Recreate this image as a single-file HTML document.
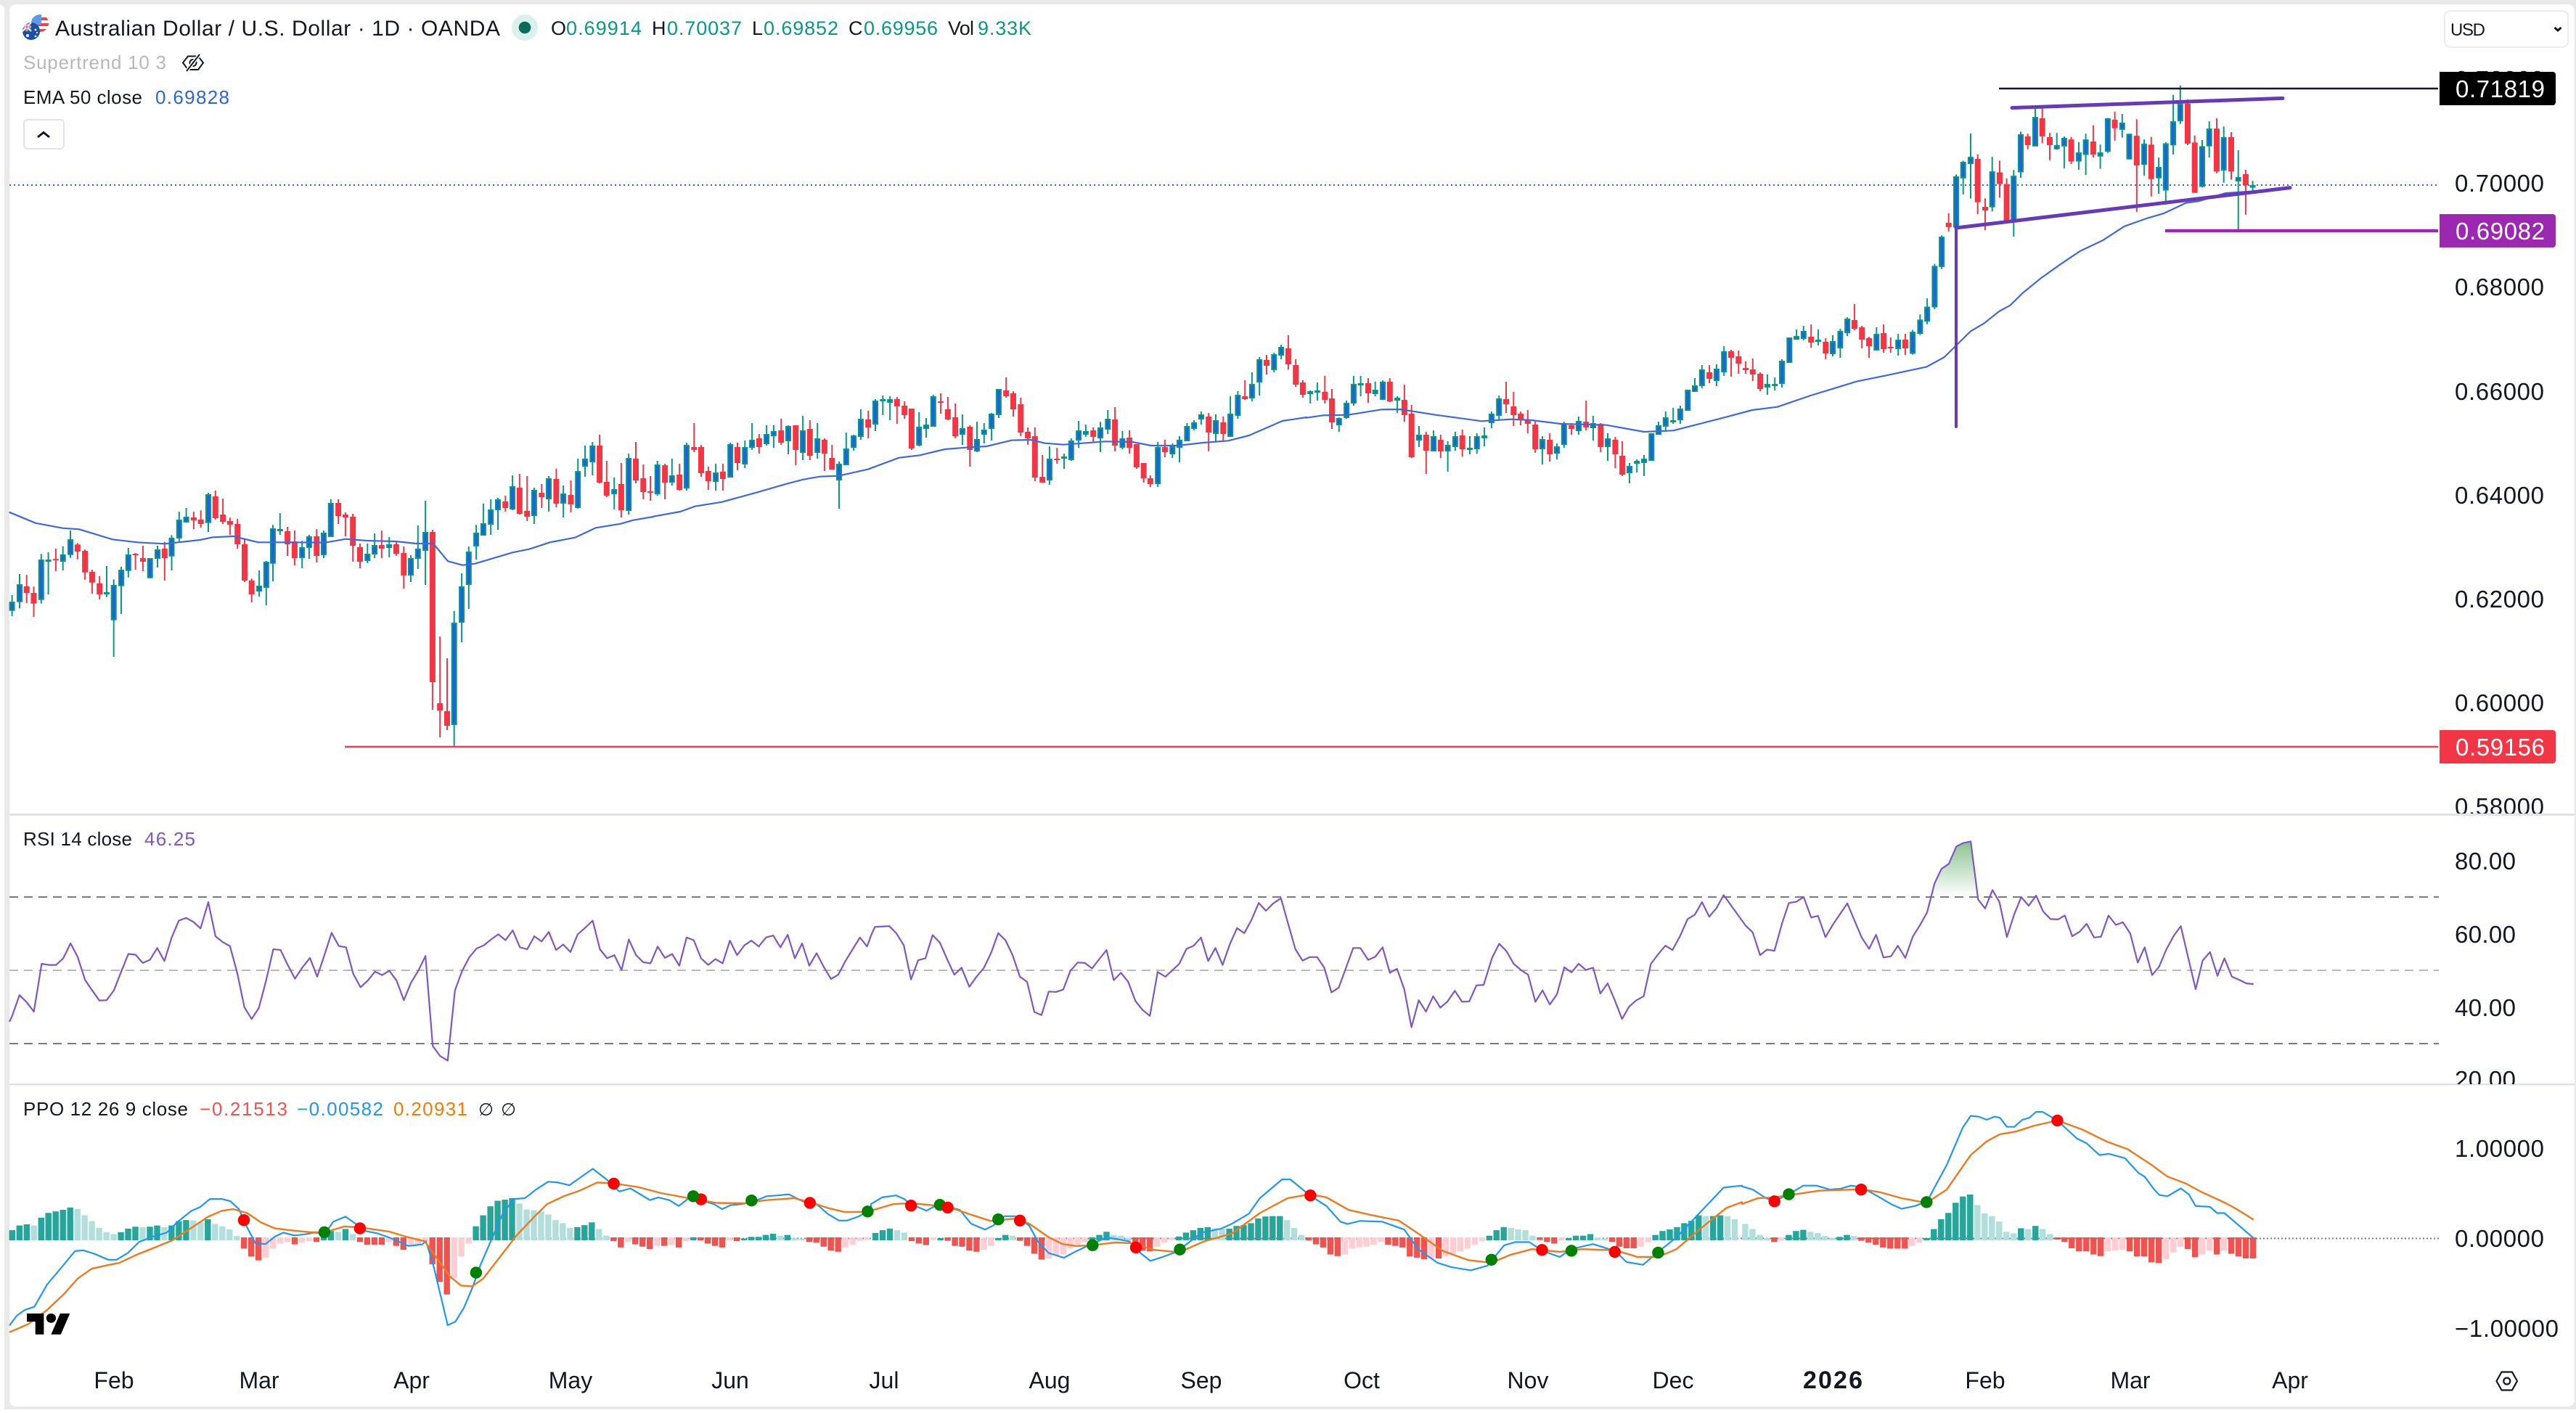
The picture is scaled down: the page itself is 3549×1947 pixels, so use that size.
<!DOCTYPE html>
<html lang="en"><head><meta charset="utf-8"><title>AUD/USD chart</title>
<style>
html,body{margin:0;padding:0;background:#e9e9e9;width:3549px;height:1947px;overflow:hidden}
svg{display:block}
text{font-family:"Liberation Sans",sans-serif;fill:#131722}
.a{font-size:33px}
.w{font-size:33px;fill:#fff}
.t{font-size:32px;text-anchor:middle}
.l{font-size:26px}
.h{font-size:27px}
.g{fill:#089981}
</style></head><body>
<svg xmlns="http://www.w3.org/2000/svg" width="3549" height="1947" viewBox="0 0 3549 1947">
<defs>
<clipPath id="c1"><rect x="3300" y="1080" width="249" height="41"/></clipPath>
<clipPath id="c2"><rect x="3300" y="1450" width="249" height="44"/></clipPath>
<clipPath id="f1"><circle cx="55" cy="32" r="12"/></clipPath>
<clipPath id="f2"><circle cx="43" cy="43" r="12"/></clipPath>
<linearGradient id="gr" x1="0" y1="0" x2="0" y2="1"><stop offset="0" stop-color="#8cc38f"/><stop offset="1" stop-color="#ffffff"/></linearGradient>
</defs>
<rect x="0" y="0" width="3549" height="1947" fill="#e9e9e9"/>
<rect x="-10" y="6" width="16" height="1950" rx="8" fill="#fff"/>
<rect x="13" y="6" width="3534" height="1932" rx="9" fill="#fff"/>
<rect x="0" y="1942" width="3549" height="5" fill="#fff"/>
<rect x="13" y="1121" width="3534" height="3" fill="#e0e3eb"/>
<rect x="13" y="1493" width="3534" height="2.5" fill="#e0e3eb"/>

<!-- price pane decorations -->
<line x1="13" y1="255" x2="3360" y2="255" stroke="#2962ff" stroke-width="2" stroke-dasharray="2 4"/>
<g id="candles"></g>
<polyline id="ema" fill="none" stroke="#3f68de" stroke-width="2.2" stroke-linejoin="round"/>
<line x1="2754" y1="122" x2="3359" y2="122" stroke="#131722" stroke-width="2.6"/>
<line x1="2772" y1="148.6" x2="3145" y2="135.4" stroke="#673ab7" stroke-width="5" stroke-linecap="round"/>
<line x1="2695" y1="314" x2="3155" y2="258.6" stroke="#673ab7" stroke-width="5" stroke-linecap="round"/>
<line x1="2695" y1="312" x2="2695" y2="588" stroke="#673ab7" stroke-width="4" stroke-linecap="round"/>
<line x1="2983" y1="318" x2="3359" y2="318" stroke="#9c27b0" stroke-width="4.6"/>
<line x1="475" y1="1029" x2="3359" y2="1029" stroke="#e5404f" stroke-width="2.6"/>

<!-- price axis -->
<text class="a" x="3382" y="121" textLength="123">0.72000</text>
<text class="a" x="3382" y="264" textLength="123">0.70000</text>
<text class="a" x="3382" y="407" textLength="123">0.68000</text>
<text class="a" x="3382" y="551" textLength="123">0.66000</text>
<text class="a" x="3382" y="694" textLength="123">0.64000</text>
<text class="a" x="3382" y="837" textLength="123">0.62000</text>
<text class="a" x="3382" y="980" textLength="123">0.60000</text>
<g clip-path="url(#c1)"><text class="a" x="3382" y="1123" textLength="123">0.58000</text></g>
<path d="M3361 99H3517a4 4 0 0 1 4 4V141a4 4 0 0 1-4 4H3361Z" fill="#000"/>
<text class="w" x="3383" y="134" textLength="123">0.71819</text>
<path d="M3361 295H3517a4 4 0 0 1 4 4V337a4 4 0 0 1-4 4H3361Z" fill="#9c27b0"/>
<text class="w" x="3383" y="330" textLength="123">0.69082</text>
<path d="M3361 1006H3517a4 4 0 0 1 4 4V1048a4 4 0 0 1-4 4H3361Z" fill="#f23645"/>
<text class="w" x="3383" y="1041" textLength="123">0.59156</text>

<!-- RSI -->
<polygon id="rsifill" fill="url(#gr)"/>
<line x1="13" y1="1236" x2="3360" y2="1236" stroke="#787b86" stroke-width="2" stroke-dasharray="12 8"/>
<line x1="13" y1="1337" x2="3360" y2="1337" stroke="#b9b9b9" stroke-width="2" stroke-dasharray="12 8"/>
<line x1="13" y1="1438" x2="3360" y2="1438" stroke="#787b86" stroke-width="2" stroke-dasharray="12 8"/>
<polyline id="rsi" fill="none" stroke="#7e57c2" stroke-width="2.2" stroke-linejoin="round"/>
<text class="a" x="3382" y="1198" textLength="84">80.00</text>
<text class="a" x="3382" y="1299" textLength="84">60.00</text>
<text class="a" x="3382" y="1400" textLength="84">40.00</text>
<g clip-path="url(#c2)"><text class="a" x="3382" y="1499" textLength="84">20.00</text></g>
<text class="l" x="32" y="1165" textLength="150">RSI 14 close</text>
<text class="l" x="199" y="1165" textLength="70" style="fill:#7e57c2">46.25</text>

<!-- PPO -->
<line x1="13" y1="1706.5" x2="3360" y2="1706.5" stroke="#787b86" stroke-width="2" stroke-dasharray="2 3"/>
<g id="hist"></g>
<polyline id="ppoB" fill="none" stroke="#2196f3" stroke-width="2.2" stroke-linejoin="round"/>
<polyline id="ppoO" fill="none" stroke="#ee7a1e" stroke-width="2.4" stroke-linejoin="round"/>
<g id="dots"></g>
<text class="a" x="3382" y="1594" textLength="123">1.00000</text>
<text class="a" x="3382" y="1718" textLength="123">0.00000</text>
<text class="a" x="3382" y="1842" textLength="143">−1.00000</text>
<text class="l" x="32" y="1537" textLength="227">PPO 12 26 9 close</text>
<text class="l" x="275" y="1537" textLength="121" style="fill:#ef5350">−0.21513</text>
<text class="l" x="409" y="1537" textLength="119" style="fill:#2196f3">−0.00582</text>
<text class="l" x="542" y="1537" textLength="102" style="fill:#f57c00">0.20931</text>
<text x="659" y="1537" style="font-size:24px;font-family:'DejaVu Sans',sans-serif">∅</text>
<text x="690" y="1537" style="font-size:24px;font-family:'DejaVu Sans',sans-serif">∅</text>

<!-- TV logo -->
<g transform="translate(37 1803.5) scale(1.67 1.6)" fill="#000"><path d="M14 22H7V11H0V4h14v18zM28 22h-8l7.5-18h8L28 22z"/><circle cx="20" cy="8" r="4"/></g>

<!-- time axis -->
<text class="t" x="157" y="1913">Feb</text>
<text class="t" x="357" y="1913">Mar</text>
<text class="t" x="567" y="1913">Apr</text>
<text class="t" x="786" y="1913">May</text>
<text class="t" x="1006" y="1913">Jun</text>
<text class="t" x="1218" y="1913">Jul</text>
<text class="t" x="1446" y="1913">Aug</text>
<text class="t" x="1655" y="1913">Sep</text>
<text class="t" x="1876" y="1913">Oct</text>
<text class="t" x="2105" y="1913">Nov</text>
<text class="t" x="2305" y="1913">Dec</text>
<text class="t" x="2525" y="1913" style="font-weight:700;font-size:34px" textLength="82">2026</text>
<text class="t" x="2735" y="1913">Feb</text>
<text class="t" x="2935" y="1913">Mar</text>
<text class="t" x="3155" y="1913">Apr</text>
<path d="M3439.5 1903L3446.5 1890.5H3461L3468 1903L3461 1915.5H3446.5Z" fill="none" stroke="#131722" stroke-width="2.2" stroke-linejoin="round"/>
<circle cx="3453.8" cy="1903" r="4.5" fill="none" stroke="#131722" stroke-width="2.2"/>

<!-- legend -->
<g clip-path="url(#f1)"><rect x="43" y="20" width="24" height="24" fill="#fff"/>
<path d="M43 24h24v4H43zM43 32h24v4H43zM43 40h24v4H43z" fill="#e8434f"/><rect x="43" y="20" width="14" height="14" fill="#5b9be8"/></g>
<g clip-path="url(#f2)"><rect x="31" y="31" width="24" height="24" fill="#1c4fa6"/>
<rect x="31" y="31" width="12" height="12" fill="#3b5fb0"/>
<path d="M31 31L43 43M43 31L31 43" stroke="#fff" stroke-width="2"/><path d="M37 31V43M31 37H43" stroke="#fff" stroke-width="2.4"/><path d="M37 31V43M31 37H43" stroke="#e0444f" stroke-width="1.1"/>
<circle cx="49" cy="41" r="1.4" fill="#fff"/><circle cx="49" cy="50" r="1.4" fill="#fff"/><circle cx="38" cy="49" r="2" fill="#fff"/><circle cx="51" cy="45" r="1.1" fill="#fff"/></g>
<text x="76" y="49" style="font-size:30px" textLength="613">Australian Dollar / U.S. Dollar · 1D · OANDA</text>
<circle cx="723" cy="38" r="18" fill="#dbf0ec"/>
<circle cx="723" cy="38" r="8.3" fill="#0a6b58"/>
<text class="h" x="759" y="48" textLength="18">O</text><text class="h g" x="780" y="48" textLength="104">0.69914</text>
<text class="h" x="898" y="48" textLength="18">H</text><text class="h g" x="919" y="48" textLength="103">0.70037</text>
<text class="h" x="1036" y="48" textLength="14">L</text><text class="h g" x="1052" y="48" textLength="103">0.69852</text>
<text class="h" x="1169" y="48" textLength="18">C</text><text class="h g" x="1190" y="48" textLength="102">0.69956</text>
<text class="h" x="1306" y="48" textLength="36">Vol</text><text class="h g" x="1347" y="48" textLength="74">9.33K</text>
<text class="l" x="32" y="95" textLength="197" style="fill:#b8b8b8">Supertrend 10 3</text>
<path d="M252 86.5L259 77.5H273L280 86.5L273 96H259Z" fill="none" stroke="#131722" stroke-width="2" stroke-linejoin="round"/>
<circle cx="266" cy="86.5" r="4.5" fill="none" stroke="#131722" stroke-width="2"/>
<line x1="275" y1="75" x2="257" y2="98" stroke="#fff" stroke-width="5"/>
<line x1="275" y1="75" x2="257" y2="98" stroke="#131722" stroke-width="2"/>
<text class="l" x="32" y="143" textLength="164">EMA 50 close</text>
<text class="l" x="214" y="143" textLength="102" style="fill:#2f62e0">0.69828</text>
<rect x="33" y="165" width="55" height="40" rx="5" fill="#fff" stroke="#e0e3eb" stroke-width="2"/>
<path d="M52 189L60 182.5L68 189" fill="none" stroke="#131722" stroke-width="3"/>
<rect x="3368" y="15" width="170" height="50" rx="8" fill="#fff" stroke="#ececec" stroke-width="2"/>
<text x="3376" y="49" style="font-size:24px" textLength="48">USD</text>
<path d="M3519.5 38L3524 42L3528.5 38" fill="none" stroke="#131722" stroke-width="3"/>
</svg>
<script>
(function(){
function $(i){return document.getElementById(i)}
function cs(sx,ox,sy,oy,s){var u={w:'',b:''},d={w:'',b:''},upB='';
 s.trim().split(/\s+/).forEach(function(e){var p=e.split(',');var x=ox+(+p[0])/sx;
  var H=oy+(+p[1])/sy,T=oy+(+p[2])/sy,B=oy+(+p[3])/sy,L=oy+(+p[4])/sy;x=Math.round(x*10)/10;
  var o=p[5]=='u'?u:d;o.w+='M'+x+' '+H.toFixed(1)+'V'+L.toFixed(1);
  if(p[5]=='u'){upB+='<rect x="'+(x-3)+'" y="'+(T+1).toFixed(1)+'" width="6" height="'+Math.max(B-T-2,1).toFixed(1)+'"/>';}
  else{o.b+='M'+x+' '+T.toFixed(1)+'V'+Math.max(B,T+2).toFixed(1);}
 });
 return '<path d="'+u.w+'" stroke="#089981" stroke-width="2" fill="none"/><path d="'+d.w+'" stroke="#f23645" stroke-width="2" fill="none"/>'+
  '<path d="'+d.b+'" stroke="#f23645" stroke-width="8" fill="none"/><g fill="#1f62dc" stroke="#089981" stroke-width="2">'+upB+'</g>';}
var c='';
c+=cs(1.742,0,3,640,"29,540,567,605,627,u 47,453,495,569,595,u 64,457,504,531,573,d 81,505,531,575,630,d 99,370,393,560,575,u 116,363,393,398,537,u 134,348,391,396,441,d 151,338,372,402,438,u 169,273,309,374,386,u 186,325,331,360,392,d 204,351,357,446,476,d 221,435,444,488,534,d 239,462,491,537,558,d 256,420,528,533,548,u 273,475,498,644,795,u 291,423,435,503,618,u 308,345,372,440,467,u 325,366,369,374,435,d 343,336,387,402,441,d 360,387,387,470,470,u 378,336,351,390,426,u 395,320,348,387,480,d 412,292,303,380,438,u 430,195,228,306,318,u 447,180,216,240,240,u 465,195,219,231,268,d 482,190,228,246,261,d 500,117,123,242,279,u 517,108,132,222,228,d 535,141,207,237,246,d 552,220,234,249,292,d 570,225,246,330,348,d 587,310,330,480,486,d 604,472,480,537,570,d 622,438,501,525,546,u 639,399,402,510,582,u 655,250,264,410,483,u 672,201,267,273,291,u 690,258,276,330,378,d 707,273,318,387,417,d 725,316,342,387,429,u 742,291,297,345,390,u 760,267,297,378,405,d 777,273,282,375,387,u 794,144,159,300,300,u 812,144,159,213,246,d 829,198,207,219,297,d 847,204,216,336,402,d 864,327,342,402,429,d 882,327,369,399,408,u 899,285,333,372,387,u 916,273,333,348,387,d 934,300,330,345,384,u 951,318,330,369,378,d 969,339,366,459,513,d 986,375,387,459,486,u 1003,252,348,390,432,u 1021,150,279,357,498,u 1038,270,279,900,1014,d 1056,711,987,1017,1128,d 1073,801,1020,1080,1098,d 1090,606,654,1077,1167,u 1108,450,504,654,735,u 1125,339,360,498,597,u 1143,250,282,339,393,u 1160,162,243,294,294,u 1178,144,186,249,291,u 1195,138,144,189,270,u 1213,129,153,180,195,d 1230,45,90,186,189,u 1247,39,96,204,207,d 1265,48,192,216,234,d 1282,96,105,213,246,u 1300,81,117,135,180,d 1317,48,57,144,195,u 1335,18,60,162,177,d 1352,87,120,162,219,u 1370,66,126,165,198,d 1387,-24,27,180,183,u 1404,-78,-24,9,51,u 1422,-93,-78,-9,45,u 1439,-123,-78,75,78,d 1456,-15,72,129,135,d 1474,54,102,123,186,u 1491,-6,81,189,219,d 1509,-45,-27,192,207,u 1526,-93,-24,66,78,d 1544,0,57,114,144,d 1561,48,111,117,150,d");
c+=cs(1.742,900,3,420,"10,645,660,783,789,u 28,657,663,735,804,d 45,636,705,735,747,u 63,657,702,765,768,d 80,570,579,759,768,u 98,489,588,600,609,d 115,579,588,696,711,d 132,669,687,729,765,d 150,657,693,732,768,u 167,657,690,720,768,d 185,570,576,714,714,u 202,570,588,654,684,d 220,561,588,660,675,u 237,489,558,591,600,u 254,534,552,588,615,d 272,498,534,576,582,u 289,498,522,543,591,u 307,471,519,570,579,d 324,498,501,564,618,u 342,498,498,600,663,d 359,459,519,612,642,u 376,477,513,624,642,d 394,489,552,612,636,u 411,552,558,615,687,d 429,579,633,681,681,d 446,648,657,726,843,u 463,528,594,663,663,u 481,537,540,591,603,u 498,432,471,546,558,u 516,438,474,507,552,d 533,390,396,495,522,u 551,375,390,396,456,u 568,378,390,405,477,u 585,381,390,420,492,d 603,399,417,456,471,d 620,429,429,594,600,d 638,444,504,582,585,u 655,468,495,513,549,u 672,372,378,504,504,u 690,366,399,405,450,d 707,381,432,474,477,d 725,408,465,543,552,d 742,453,510,537,579,u 760,498,504,600,669,d 777,483,555,606,609,u 794,489,516,537,573,u 812,447,450,513,561,u 829,348,348,456,468,u 847,300,354,378,384,d 864,357,366,432,462,d 882,384,411,528,543,d 899,507,525,552,579,d 916,507,543,714,729,d 934,621,711,735,735,d 951,585,636,726,744,u 969,591,636,642,657,d 986,615,627,633,678,u 1003,552,561,642,645,u 1021,480,519,561,591,u 1038,495,522,537,546,u 1056,507,519,546,570,d 1073,484,507,552,609,u 1091,435,471,516,534,u 1108,423,474,582,606,d 1126,522,552,591,597,u 1143,519,549,591,615,d 1160,576,576,672,678,d 1177,654,654,717,735,d 1193,705,717,741,753,d 1211,567,588,741,753,u 1228,558,588,609,630,d 1246,573,585,618,633,u 1263,543,558,591,651,u 1281,489,501,564,564,u 1298,477,486,513,519,u 1315,441,453,474,495,u 1333,447,462,528,606,d 1350,453,477,534,567,u 1368,462,486,534,567,d 1385,378,450,546,546,u 1403,357,372,459,471,u 1420,312,378,390,393,d 1437,279,327,387,399,u 1455,216,225,321,375,u 1472,207,228,252,288,d 1490,198,204,270,279,u 1507,165,174,210,225,u 1524,126,180,246,267,d 1542,225,249,330,339,d 1559,312,321,372,384,d");
c+=cs(1.742,1800,3,420,"9,354,357,369,408,u 26,321,354,360,396,u 44,294,360,393,408,d 61,348,387,486,513,d 78,465,468,498,525,u 96,396,405,468,471,u 113,294,327,408,417,u 130,294,324,330,378,u 148,303,324,366,405,d 165,318,351,369,378,u 183,312,318,393,393,u 200,303,318,399,402,d 218,378,384,396,447,u 235,330,393,456,483,d 252,414,450,630,633,d 270,501,537,561,588,u 287,525,537,603,699,d 305,519,543,606,606,u 322,537,558,606,633,d 339,564,579,606,690,u 357,525,543,588,603,u 374,516,540,597,627,d 392,543,591,597,618,u 409,531,543,597,615,u 427,507,540,552,585,u 444,441,450,489,510,u 462,375,387,459,474,u 479,318,390,411,447,d 497,360,420,456,501,d 514,441,450,474,498,d 531,435,474,492,531,d 549,483,495,597,612,d 566,543,555,597,660,u 584,531,558,618,648,d 601,573,585,615,639,u 618,483,489,579,591,u 636,489,498,513,537,d 653,462,480,522,537,u 671,396,483,507,519,d 688,459,489,510,561,u 706,489,492,588,609,d 723,531,552,588,645,u 741,546,558,618,675,d 758,564,624,702,708,d 775,654,666,696,738,u 793,639,645,657,693,u 810,621,636,654,708,u 828,531,531,645,645,u 845,483,498,537,537,u 862,441,465,504,519,u 880,426,477,486,492,u 897,417,429,477,492,u 915,351,351,438,438,u 932,303,333,360,360,u 949,249,267,336,345,u 967,249,279,306,324,d 984,246,264,315,336,u 1002,171,192,279,294,u 1019,186,192,219,297,d 1037,189,213,243,285,d 1054,234,261,270,285,d 1071,222,267,288,315,d 1089,279,285,348,357,d 1106,288,327,342,372,u 1124,300,327,333,354,u 1141,225,231,327,342,u 1159,135,135,240,240,u 1176,102,129,144,144,u 1193,87,108,141,147,u 1211,81,132,156,177,d 1228,102,144,150,168,u 1246,138,153,201,225,d 1263,126,150,204,213,u 1281,99,108,180,219,u 1298,51,57,117,129,u 1315,-3,63,99,105,d 1333,87,93,144,180,d 1350,132,138,171,219,d 1368,93,120,189,189,u 1385,81,117,183,198,d 1402,135,174,180,198,d 1420,120,144,183,210,u 1437,120,144,180,207,d");
c+=cs(1.652,2600,2.8,60,"58,1105,1112,1197,1200,u 75,1045,1065,1120,1125,u 91,983,1015,1073,1083,u 108,850,858,1018,1025,u 124,740,745,862,870,u 140,655,692,708,725,d 157,505,512,710,735,u 173,452,456,520,582,u 190,347,437,465,598,u 206,427,445,612,658,d 223,597,630,644,720,d 239,437,493,632,648,u 256,452,497,542,595,d 272,520,542,685,685,d 288,488,510,685,745,u 304,340,350,497,518,u 320,348,358,392,408,d 337,250,283,397,397,u 353,242,288,358,385,d 370,345,361,392,450,d 386,345,392,408,410,u 403,358,364,397,482,u 419,360,370,455,465,d 436,380,420,455,487,u 452,348,370,430,507,u 469,315,378,428,440,d 485,390,420,436,483,u 502,287,288,417,422,u 518,263,294,327,375,d 535,272,305,333,363,u 551,348,348,447,447,u 568,292,356,470,650,d 585,370,386,468,510,u 601,360,390,523,590,d 618,440,476,520,580,u 634,380,385,567,622,u 651,198,300,393,428,u 667,162,232,300,310,u 684,216,232,386,392,d 700,355,382,576,576,d 717,372,396,553,555,u 733,300,328,397,440,u 750,288,328,494,500,d 766,320,361,490,537,u 783,342,361,494,525,d 799,412,515,532,718,u 816,487,504,546,660,d 832,530,546,556,567,u");
$('candles').innerHTML=c;

function pts(sx,ox,sy,oy,s){return s.trim().split(/\s+/).map(function(e){var p=e.split(',');return (ox+(+p[0])/sx).toFixed(1)+','+(oy+(+p[1])/sy).toFixed(1)}).join(' ')}
var A=1568/847;
$('ema').setAttribute('points',[
pts(1.742,0,3,640,"22,197 85,242 150,263 190,268 270,310 330,322 395,328 480,312 510,301 560,297 620,322 700,322 780,323 830,308 880,315 950,318 1000,327 1040,327 1075,400 1110,416 1140,410 1230,364 1270,350 1320,322 1380,302 1430,262 1490,245 1520,230 1568,216"),
pts(1.742,900,3,420,"0,875 65,855 100,833 165,815 250,775 320,740 360,722 400,710 445,707 515,680 590,632 640,622 700,597 750,590 800,585 860,560 905,558 940,572 985,578 1085,565 1150,567 1195,582 1260,582 1320,570 1380,562 1430,540 1510,480 1568,465"),
pts(1.742,1800,3,420,"0,467 40,457 100,455 180,433 225,432 310,455 420,481 490,473 540,477 610,492 720,497 810,525 880,520 1000,467 1070,435 1130,422 1210,375 1320,317"),
pts(1.652,2600,2.8,60,"0,1280 90,1247 130,1210 157,1165 190,1110 220,1080 255,1033 280,1010 310,960 350,905 400,845 440,800 490,760 540,705 590,675 630,655 680,615 710,608 770,577 830,570")
].join(' '));
$('rsi').setAttribute('points',[
pts(1.3067,0,A,1100,"17,570 22,555 35,502 48,520 61,544 75,422 88,425 101,425 114,408 127,370 140,405 153,463 166,490 179,516 192,515 205,490 218,443 231,397 244,399 257,420 270,412 283,382 296,415 309,355 322,312 335,305 348,315 361,332 375,265 388,352 401,367 414,377 427,445 440,533 453,563 466,535 479,465 492,385 505,387 518,425 531,460 544,432 558,407 571,455 584,400 597,343 610,377 623,380 636,448 649,482 662,465 675,442 688,451 701,440 714,465 727,515 740,470 753,440 766,402 779,632 792,657 806,669 819,490 832,440 845,405 858,383 871,375 884,360 897,347 910,362 923,337 936,380 949,385 962,352 975,365 988,341 1001,387 1014,373 1027,392 1040,347 1053,331 1067,312 1080,385 1093,408 1106,400 1119,438 1132,360 1145,400 1158,418 1171,421 1184,378 1197,407 1210,397 1223,427 1236,355 1249,362 1262,408 1275,425 1288,410 1301,421 1314,363 1327,400 1340,375 1353,363 1366,378 1379,355 1392,350 1405,380 1418,348 1431,408 1444,370 1457,427 1470,395 1483,430 1496,461 1509,450 1522,415 1535,385 1548,355 1561,378 1568,350"),
pts(1.3067,1200,A,1100,"7,328 20,327 33,326 46,345 59,375 72,462 85,413 98,408 111,349 124,368 137,410 150,450 163,432 177,481 190,455 203,433 216,395 229,344 242,362 255,400 268,455 281,468 294,545 307,553 320,493 333,494 346,488 359,440 372,419 385,420 398,434 411,410 424,387 437,464 450,445 463,468 476,517 489,540 502,555 516,443 530,455 543,438 555,422 568,384 581,376 594,355 607,415 620,382 633,425 646,372 659,331 672,344 685,310 698,267 711,287 724,268 738,255 751,320 764,385 777,414 790,405 803,405 816,432 829,495 842,483 855,433 868,382 881,382 895,412 908,404 921,380 934,445 947,435 960,487 973,584 986,515 999,544 1012,505 1025,534 1038,518 1051,491 1064,519 1077,518 1090,477 1103,476 1118,407 1131,371 1144,390 1157,422 1170,438 1183,450 1196,519 1209,490 1222,526 1235,500 1248,431 1261,444 1274,422 1287,438 1300,432 1313,498 1326,472 1339,515 1352,563 1365,531 1378,515 1391,505 1404,422 1417,398 1430,376 1443,387 1457,350 1470,308 1483,297 1496,265 1509,302 1522,280 1535,247 1568,312"),
pts(1.3647,2400,A,1100,"7,325 20,342 34,400 47,386 61,389 75,320 88,267 102,264 116,252 130,304 143,300 157,354 171,322 184,296 198,268 211,310 225,355 239,384 252,348 266,406 280,403 293,376 307,407 321,353 334,325 348,291 362,217 375,180 389,167 403,123 416,114 430,110 444,258 457,281 471,234 484,265 498,354 512,295 525,252 539,274 553,248 566,288 580,308 594,309 607,299 621,352 635,340 648,320 662,355 675,353 689,299 703,323 716,316 730,345 744,419 757,380 771,451 784,430 798,385 812,350 825,326 839,407 853,487 866,414 880,392 894,453 907,408 921,455 935,463 948,472 962,474")
].join(' '));
$('rsifill').setAttribute('points',pts(1.3647,2400,A,1100,"353,252 362,217 375,180 389,167 403,123 416,114 430,110 441,252"));
$('ppoB').setAttribute('points',[
pts(1.3067,0,A,1100,"17,1345 30,1320 45,1305 62,1297 85,1240 110,1198 135,1155 150,1153 170,1162 195,1177 210,1177 230,1160 250,1132 275,1118 300,1108 320,1080 345,1052 360,1043 378,1022 400,1022 415,1028 430,1048 445,1095 460,1135 478,1137 495,1118 510,1108 530,1115 550,1112 565,1108 585,1110 600,1080 622,1067 640,1085 655,1103 680,1110 700,1120 720,1132 735,1142 760,1138 767,1130 780,1190 806,1344 820,1335 835,1300 850,1250 865,1190 885,1125 905,1060 925,1022 945,1020 965,998 987,978 1005,980 1025,987 1045,967 1067,945 1090,970 1115,1003 1135,995 1170,1025 1185,1018 1205,1025 1222,1040 1240,1020 1260,1025 1285,1035 1300,1048 1315,1038 1335,1035 1355,1030 1380,1015 1400,1013 1420,1010 1445,1028 1470,1035 1490,1060 1510,1077 1525,1077 1545,1067 1568,1050"),
pts(1.3067,1200,A,1100,"0,1035 20,1018 45,1013 60,1022 72,1038 85,1043 100,1052 125,1032 135,1040 160,1050 180,1085 205,1100 220,1090 240,1066 260,1066 285,1090 300,1130 320,1160 347,1172 370,1155 400,1135 425,1120 445,1125 465,1130 485,1160 503,1180 525,1170 550,1157 575,1130 595,1108 630,1098 650,1085 680,1060 700,1020 740,972 755,972 790,1013 820,1040 845,1080 858,1086 880,1078 920,1080 960,1100 985,1150 1020,1185 1045,1196 1080,1204 1110,1192 1140,1140 1160,1132 1185,1132 1210,1155 1240,1170 1260,1150 1300,1137 1340,1155 1360,1183 1390,1190 1417,1157 1450,1120 1490,1060 1535,993 1568,988"),
pts(1.3647,2400,A,1100,"0,990 20,998 45,1020 60,1028 88,1010 115,988 140,988 165,998 185,996 205,988 225,992 255,1015 280,1035 300,1047 325,1040 348,1028 385,935 415,840 430,810 445,812 460,820 475,812 485,815 498,838 512,838 527,820 540,815 553,800 565,800 593,822 630,868 648,880 672,910 690,907 720,918 745,955 757,965 775,998 785,1012 800,1015 825,995 840,1010 853,1040 880,1042 893,1058 907,1058 962,1122")
].join(' '));
$('ppoO').setAttribute('points',[
pts(1.3067,0,A,1100,"17,1362 50,1342 85,1305 115,1265 140,1225 165,1200 190,1192 215,1185 245,1165 280,1145 310,1128 340,1100 375,1067 400,1052 420,1048 445,1058 470,1082 495,1097 530,1103 560,1107 585,1107 620,1092 650,1095 700,1105 730,1118 765,1130 785,1170 810,1220 830,1243 850,1245 870,1225 900,1170 930,1115 960,1070 985,1035 1015,1015 1045,1000 1075,980 1105,982 1150,992 1190,1007 1240,1020 1290,1032 1340,1033 1380,1025 1430,1020 1458,1030 1490,1045 1520,1055 1568,1055"),
pts(1.3067,1200,A,1100,"0,1052 40,1035 72,1033 110,1038 140,1043 180,1062 215,1078 260,1072 285,1085 320,1120 345,1137 370,1142 400,1140 440,1133 470,1135 510,1152 555,1158 600,1130 650,1110 700,1058 750,1020 790,1010 820,1018 860,1050 900,1063 950,1077 990,1115 1030,1155 1075,1178 1117,1185 1150,1165 1190,1150 1240,1157 1280,1150 1340,1153 1380,1170 1417,1170 1450,1150 1500,1090 1540,1045 1568,1030"),
pts(1.3647,2400,A,1100,"0,1035 30,1020 60,1018 90,1012 145,1001 190,999 225,997 260,1005 300,1020 347,1032 385,998 430,910 460,875 485,857 515,850 550,835 593,822 640,845 685,875 725,895 770,935 800,965 835,983 865,1005 910,1033 930,1048 962,1075")
].join(' '));

var hs=[
 [1.3067,0,22,1561,"22 34 37 34 54 66 70 74 80 76 60 45 28 17 12 17 26 31 30 31 34 30 34 45 48 47 42 50 38 32 24 7 -25 -45 -55 -48 -25 -12 -8 -14 -10 -6 -8 8 20 18 25 12 -8 -15 -15 -15 -8 -18 -28 -18 -16 -8 -65 -110 -142 -100 -45 -12 32 60 83 97 100 104 90 75 73 70 62 48 40 28 30 35 42 25 8 -6 -22 -8 -14 -20 -26 -18 -18 -16 -22 -6 4 -4 -12 -18 -22 -4 -6 1 5 5 10 13 8 10 2 1 -8 -10 -20 -30 -33 -22 -15 -5 -3"],
 [1.3067,1200,8,1555,"15 22 26 22 16 -6 -12 -16 -2 2 -5 -18 -20 -30 -33 -28 -18 2 10 8 -5 -18 -38 -53 -50 -42 -40 -25 -15 -8 4 10 18 10 8 3 -20 -30 -32 -20 -10 -3 6 16 22 28 30 27 25 26 33 35 40 52 57 58 58 48 28 10 -4 -14 -22 -40 -44 -40 -25 -22 -20 -15 -8 -15 -18 -22 -45 -48 -52 -50 -50 -44 -38 -32 -25 -15 -6 8 22 30 28 24 22 8 -3 -8 -12 -4 2 8 8 12 2 1 -8 -20 -24 -24 -20 -8 10 20 24 30 40 46 60 58 58 60 58 50"],
 [1.3647,2400,6,961,"38 25 10 2 -8 -4 10 20 23 18 15 7 3 5 10 7 -5 -10 -15 -22 -25 -25 -25 -18 -10 2 25 50 66 92 108 113 86 65 58 44 18 14 27 25 33 25 12 -2 -8 -24 -32 -32 -40 -44 -32 -30 -28 -32 -45 -45 -60 -62 -52 -35 -20 -26 -47 -40 -30 -40 -30 -38 -45 -50 -50"]];
var prev=0,h='';
hs.forEach(function(s){var a=s[4].split(' ').map(Number),st=(s[3]-s[2])/(a.length-1);
 a.forEach(function(v,i){var x=s[1]+(s[2]+i*st)/s[0],ht=Math.abs(v)/A,col;
  if(v>=0)col=v>=prev?'#26a69a':'#b2dfdb';else col=v<=prev?'#ef5350':'#ffcdd2';prev=v;
  var y=v>=0?1707-ht:1705;
  h+='<rect x="'+(x-4.2).toFixed(1)+'" y="'+y.toFixed(1)+'" width="8.4" height="'+Math.max(ht+2,2).toFixed(1)+'" fill="'+col+'"/>';});});
$('hist').innerHTML=h;

function dt(sx,ox,list,col){return list.map(function(p){return '<circle cx="'+(ox+p[0]/sx).toFixed(1)+'" cy="'+(1100+p[1]/A).toFixed(1)+'" r="8.2" fill="'+col+'"/>'}).join('')}
$('dots').innerHTML=
 dt(1.3067,0,[[439,1076],[648,1097],[1105,983],[1262,1023],[1458,1032]],'#ff0000')+
 dt(1.3067,0,[[584,1107],[857,1210],[1248,1015],[1353,1026],[1562,1054]],'#008000')+
 dt(1.3067,1200,[[124,1037],[229,1074],[399,1140],[556,1151],[1117,1177],[1261,1154],[1417,1159]],'#008000')+
 dt(1.3067,1200,[[72,1039],[138,1044],[268,1077],[477,1146],[791,1013],[1208,1152],[1339,1157]],'#ff0000')+
 dt(1.3647,2400,[[61,1028],[224,998],[593,822]],'#ff0000')+
 dt(1.3647,2400,[[88,1010],[347,1030]],'#008000');
})();
</script>
</body></html>
